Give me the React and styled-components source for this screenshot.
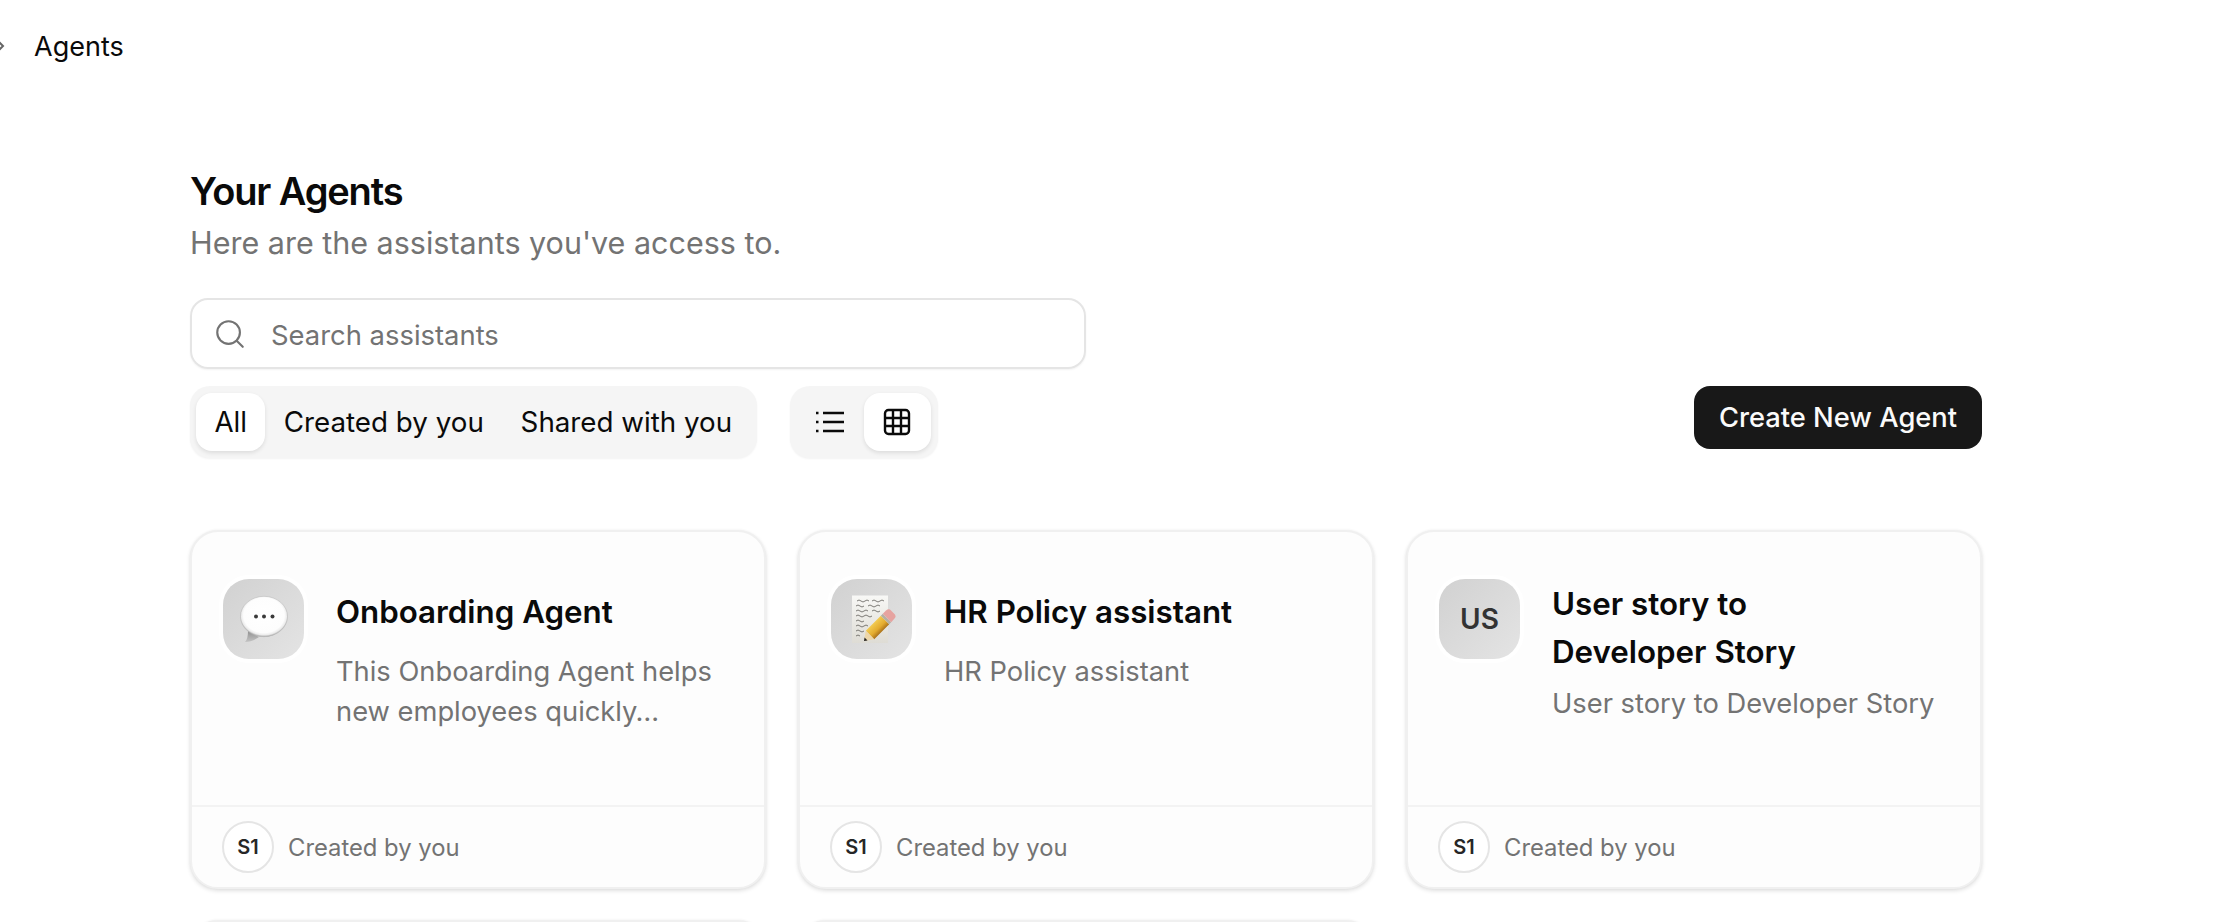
import React from "react";
import styled, { createGlobalStyle } from "styled-components";

const GlobalStyle = createGlobalStyle`
  html, body {
    margin: 0;
    padding: 0;
    background: #ffffff;
    overflow: hidden;
  }
  body {
    font-family: Inter, "Liberation Sans", sans-serif;
    color: #0a0a0a;
  }
`;

const Page = styled.div`
  height: 922px;
  overflow: hidden;
  display: flex;
  flex-direction: column;
`;

const TopBar = styled.header`
  height: 92px;
  flex-shrink: 0;
  display: flex;
  align-items: center;
  gap: 26px;
  margin-left: -6px;
  font-size: 27px;
  color: #0a0a0a;
`;

const Main = styled.main`
  width: 1792px;
  margin-left: 190px;
  display: flex;
  flex-direction: column;
`;

const Title = styled.h1`
  margin: 76px 0 0;
  font-size: 38px;
  line-height: 46px;
  font-weight: 600;
  letter-spacing: -0.03em;
  color: #0a0a0a;
`;

const Subtitle = styled.p`
  margin: 6px 0 0;
  font-size: 30.5px;
  line-height: 46px;
  color: #737373;
`;

const SearchBox = styled.div`
  margin-top: 32px;
  width: 896px;
  height: 71px;
  box-sizing: border-box;
  display: flex;
  align-items: center;
  gap: 24px;
  padding: 0 21px;
  border: 2px solid #e5e5e5;
  border-radius: 18px;
  box-shadow: 0 1px 2px rgba(0, 0, 0, 0.05);
  color: #737373;
  font-size: 27.4px;
`;

const SearchLabel = styled.span`
  padding-top: 2px;
`;

const Toolbar = styled.div`
  margin-top: 17px;
  display: flex;
  align-items: flex-start;
  gap: 33px;
`;

const Segment = styled.div`
  height: 72px;
  box-sizing: border-box;
  padding: 7px ${(p) => p.$inset}px;
  display: flex;
  align-items: stretch;
  background: #f5f5f5;
  border-radius: 20px;
  box-shadow: 0 1px 2px rgba(0, 0, 0, 0.05);
`;

const Tab = styled.div`
  display: flex;
  align-items: center;
  justify-content: center;
  padding: 0 18.4px;
  font-size: 27.75px;
  color: #0a0a0a;
  border-radius: 16px;
  background: ${(p) => (p.$active ? "#ffffff" : "transparent")};
  box-shadow: ${(p) => (p.$active ? "0 2px 4px rgba(0, 0, 0, 0.1)" : "none")};
`;

const ViewTab = styled(Tab)`
  width: 67px;
  padding: 0;
`;

const CreateButton = styled.button`
  margin-left: auto;
  height: 63px;
  width: 288px;
  border: 0;
  border-radius: 16px;
  background: #181818;
  color: #fafafa;
  font-family: inherit;
  font-size: 27.3px;
  font-weight: 500;
`;

const CardGrid = styled.div`
  margin-top: 72px;
  display: grid;
  grid-template-columns: repeat(3, 576px);
  grid-auto-rows: 359px;
  column-gap: 32px;
  row-gap: 31px;
`;

const Card = styled.article`
  box-sizing: border-box;
  display: flex;
  flex-direction: column;
  background: #fdfdfd;
  border: 2px solid #f0f0f0;
  border-radius: 28px;
  box-shadow: 0 2px 4px rgba(0, 0, 0, 0.12), 0 0 3px rgba(0, 0, 0, 0.04);
`;

const CardBody = styled.div`
  flex: 1;
  display: flex;
  gap: 32px;
  padding: 47px 32px 0 31px;
`;

const AgentIcon = styled.div`
  width: 81px;
  height: 80px;
  flex-shrink: 0;
  display: flex;
  align-items: center;
  justify-content: center;
  border-radius: 26px;
  background: linear-gradient(135deg, #d1d1d1, #e4e4e4);
  box-shadow: 0 0 0 4px #ffffff;
  color: #333333;
  font-size: 28px;
  font-weight: 600;
`;

const CardText = styled.div`
  margin-top: 1px;
  display: flex;
  flex-direction: column;
`;

const CardTitle = styled.h2`
  margin: 0 0 8px;
  max-width: 320px;
  min-height: 64px;
  display: flex;
  align-items: center;
  font-size: 31.3px;
  line-height: 48px;
  font-weight: 600;
  color: #0a0a0a;
`;

const CardDescription = styled.p`
  margin: 0;
  font-size: 27.3px;
  line-height: 40px;
  color: #737373;
`;

const CardFooter = styled.footer`
  height: 82px;
  flex-shrink: 0;
  box-sizing: border-box;
  display: flex;
  align-items: center;
  gap: 14px;
  padding: 0 30px;
  border-top: 2px solid #f3f3f3;
`;

const Avatar = styled.div`
  width: 52px;
  height: 52px;
  box-sizing: border-box;
  display: flex;
  align-items: center;
  justify-content: center;
  border: 2px solid #e5e5e5;
  border-radius: 50%;
  background: #ffffff;
  font-size: 20px;
  font-weight: 600;
  color: #262626;
`;

const FooterText = styled.span`
  font-size: 23.8px;
  color: #737373;
`;

const ChevronRight = () => (
  <svg width="14" height="14" viewBox="0 0 14 14" fill="none" stroke="#666" strokeWidth="2">
    <path d="M4 2l5 5-5 5" />
  </svg>
);

const SearchIcon = () => (
  <svg width="34" height="34" viewBox="0 0 24 24" fill="none" stroke="#737373" strokeWidth="1.5" strokeLinecap="round">
    <circle cx="11" cy="11" r="8" />
    <path d="M21 21l-4.3-4.3" />
  </svg>
);

const ListIcon = () => (
  <svg width="30" height="30" viewBox="0 0 30 30" fill="none" stroke="#0a0a0a" strokeWidth="2.4">
    <path d="M8 6h21M8 15h21M8 24h21" />
    <path d="M1 6h2.500M1 15h2.500M1 24h2.500" />
  </svg>
);

const GridIcon = () => (
  <svg width="28" height="28" viewBox="0 0 28 28" fill="none" stroke="#0a0a0a" strokeWidth="2.4">
    <rect x="2" y="2" width="24" height="24" rx="3.5" />
    <path d="M10 2v24M18 2v24M2 10h24M2 18h24" />
  </svg>
);

const BubbleEmoji = () => (
  <svg width="48" height="48" viewBox="0 0 48 48">
    <defs>
      <radialGradient id="bubbleFill" cx="50%" cy="47%" r="54%">
        <stop offset="0%" stopColor="#ffffff" />
        <stop offset="80%" stopColor="#fdfdfd" />
        <stop offset="90%" stopColor="#ececec" />
        <stop offset="100%" stopColor="#9a9a9a" />
      </radialGradient>
      <linearGradient id="bubbleTail" x1="0" y1="0" x2="0" y2="1">
        <stop offset="0%" stopColor="#8f8f8f" />
        <stop offset="100%" stopColor="#c4c4c4" />
      </linearGradient>
    </defs>
    <path d="M5 47c2-2 3-6 3-11l11 6c-4 3-9 5-14 5z" fill="url(#bubbleTail)" />
    <ellipse cx="24" cy="21.500" rx="23.500" ry="20.200" fill="url(#bubbleFill)" stroke="#b4b4b4" strokeWidth="0.5" />
    <circle cx="16" cy="21.500" r="2" fill="#3a3a3a" />
    <circle cx="24" cy="21.500" r="2" fill="#3a3a3a" />
    <circle cx="32.500" cy="21.500" r="2" fill="#3a3a3a" />
  </svg>
);

const MemoEmoji = () => (
  <svg width="48" height="48" viewBox="0 0 48 48">
    <defs>
      <linearGradient id="memoPaper" x1="0" y1="0" x2="0" y2="1">
        <stop offset="0%" stopColor="#f8f8f6" />
        <stop offset="100%" stopColor="#dedcd5" />
      </linearGradient>
      <linearGradient
        id="pencilBody"
        gradientUnits="userSpaceOnUse"
        x1="17.800"
        y1="35.700"
        x2="26.200"
        y2="44.300"
      >
        <stop offset="0%" stopColor="#f2cb52" />
        <stop offset="60%" stopColor="#e3ab2e" />
        <stop offset="100%" stopColor="#a9701a" />
      </linearGradient>
    </defs>
    <rect x="4" y="0.500" width="36" height="47.500" fill="url(#memoPaper)" />
    <path
      d="M9 6q2-2 4 0t4 0 4 0M24 6q2-2 4 0t4 0 4 0M8 11q2-2 4 0t4 0M20 11q2-2 4 0t4 0 4 0M8 16q2-2 4 0t4 0 4 0M24 16q2-2 4 0t4 0M8 21q2-2 4 0t4 0 4 0 4 0M8 26q2-2 4 0t4 0M8 31q2-2 4 0t4 0 4 0M8 36q2-2 4 0t4 0M8 41q2-2 4 0"
      fill="none"
      stroke="#4a4843"
      strokeWidth="0.7"
    />
    <path d="M17.800 35.700L32.800 20.700 41.200 29.300 26.200 44.300z" fill="url(#pencilBody)" />
    <path d="M32.800 20.700l2-2 8.400 8.600-2 2z" fill="#b5b0a4" />
    <path
      d="M34.800 18.700L38 15.500Q40 13.500 42 14.500L46.500 19Q48.500 21 46.500 23.500L43.200 27.300z"
      fill="#e6a3a0"
    />
    <path d="M17.800 35.700L16 46 26.200 44.300z" fill="#edd6a8" />
    <path d="M16.600 42.600L16 46 19.500 45.400z" fill="#222222" />
  </svg>
);

const agents = [
  {
    id: "onboarding",
    icon: <BubbleEmoji />,
    title: "Onboarding Agent",
    description: "This Onboarding Agent helps new employees quickly…"
  },
  {
    id: "hr-policy",
    icon: <MemoEmoji />,
    title: "HR Policy assistant",
    description: "HR Policy assistant"
  },
  {
    id: "user-story",
    icon: "US",
    title: "User story to Developer Story",
    description: "User story to Developer Story"
  },
  { id: "next-one", icon: null, title: "", description: "" },
  { id: "next-two", icon: null, title: "", description: "" }
];

const App = () => (
  <Page>
    <GlobalStyle />
    <TopBar>
      <ChevronRight />
      <span>Agents</span>
    </TopBar>
    <Main>
      <Title>Your Agents</Title>
      <Subtitle>Here are the assistants you've access to.</Subtitle>
      <SearchBox>
        <SearchIcon />
        <SearchLabel>Search assistants</SearchLabel>
      </SearchBox>
      <Toolbar>
        <Segment $inset={6}>
          <Tab $active>All</Tab>
          <Tab>Created by you</Tab>
          <Tab>Shared with you</Tab>
        </Segment>
        <Segment $inset={7}>
          <ViewTab>
            <ListIcon />
          </ViewTab>
          <ViewTab $active>
            <GridIcon />
          </ViewTab>
        </Segment>
        <CreateButton>Create New Agent</CreateButton>
      </Toolbar>
      <CardGrid>
        {agents.map((agent) => (
          <Card key={agent.id}>
            {agent.icon && (
              <>
                <CardBody>
                  <AgentIcon>{agent.icon}</AgentIcon>
                  <CardText>
                    <CardTitle>{agent.title}</CardTitle>
                    <CardDescription>{agent.description}</CardDescription>
                  </CardText>
                </CardBody>
                <CardFooter>
                  <Avatar>S1</Avatar>
                  <FooterText>Created by you</FooterText>
                </CardFooter>
              </>
            )}
          </Card>
        ))}
      </CardGrid>
    </Main>
  </Page>
);

export default App;
